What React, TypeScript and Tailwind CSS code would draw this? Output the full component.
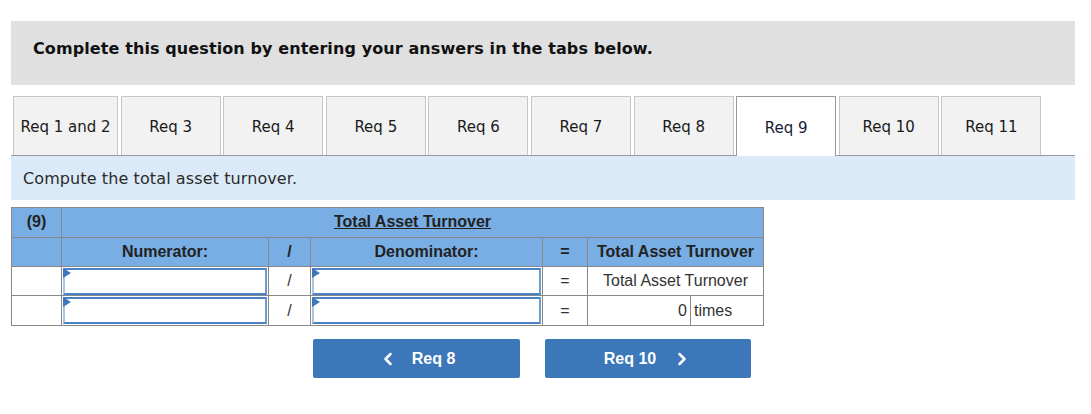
import React from "react";
import { ChevronLeft, ChevronRight } from "lucide-react";

const tabs = ["Req 1 and 2", "Req 3", "Req 4", "Req 5", "Req 6", "Req 7", "Req 8", "Req 9", "Req 10", "Req 11"];

function Field() {
  return (
    <div className="relative h-[27px] mx-px border-2 border-[#4a82c3] border-l-[#a9c6e8] border-r-[#6f9bd0] bg-white">
      <div className="absolute -left-[2px] -top-[2px] w-0 h-0 border-t-[5px] border-b-[5px] border-l-[8px] border-t-transparent border-b-transparent border-l-[#3b77b9]" />
    </div>
  );
}

export default function App() {
  const verdana = { fontFamily: '"DejaVu Sans", Verdana, sans-serif' };
  return (
    <div className="w-[1091px] h-[414px] bg-white pt-[21px] px-[11px]" style={{ fontFamily: '"Liberation Sans", Arial, sans-serif' }}>
      <div className="w-[1064px]">
        <div className="h-[64px] bg-[#e0e0e0] flex items-center pl-[22px] pb-[8px]">
          <span className="text-[16px] font-bold text-[#111] tracking-[0.1px]" style={verdana}>
            Complete this question by entering your answers in the tabs below.
          </span>
        </div>
        <div className="mt-[11px] flex items-end border-b border-[#999] pl-[2px] gap-[2.6px] h-[60px]">
          {tabs.map((t, i) => {
            const active = t === "Req 9";
            return (
              <div
                key={t}
                className={
                  "flex items-center justify-center pt-[3px] text-[15px] " +
                  (i === 0 ? "w-[105px] " : "w-[100px] ") +
                  (active
                    ? "h-[60px] -mb-px bg-white border border-b-0 border-[#999] text-[#1a1a3a]"
                    : "h-[59px] bg-[#f2f2f2] border border-b-0 border-[#c6c6c6] text-[#1a1a1a]")
                }
                style={verdana}
              >
                {t}
              </div>
            );
          })}
        </div>
        <div className="h-[44px] bg-[#dbeaf8] flex items-center pl-[12px] pt-[2px]">
          <span className="text-[16px] text-[#2b2b2b] tracking-[0.1px]" style={verdana}>
            Compute the total asset turnover.
          </span>
        </div>
        <table className="mt-[7px] border-collapse table-fixed w-[753px] text-[16px] text-[#222]">
          <colgroup>
            <col className="w-[50px]" />
            <col className="w-[207px]" />
            <col className="w-[42px]" />
            <col className="w-[232px]" />
            <col className="w-[45px]" />
            <col className="w-[103px]" />
            <col className="w-[73px]" />
          </colgroup>
          <tbody>
            <tr className="h-[30px] bg-[#78aee3] font-bold">
              <td className="border border-[#888] text-center align-top pt-[2px]">(9)</td>
              <td colSpan={6} className="border border-[#888] text-center align-top pt-[2px]">
                <span className="underline">Total Asset Turnover</span>
              </td>
            </tr>
            <tr className="h-[29px] bg-[#78aee3] font-bold">
              <td className="border border-[#888]"></td>
              <td className="border border-[#888] text-center">Numerator:</td>
              <td className="border border-[#888] text-center">/</td>
              <td className="border border-[#888] text-center">Denominator:</td>
              <td className="border border-[#888] text-center">=</td>
              <td colSpan={2} className="border border-[#888] text-center">Total Asset Turnover</td>
            </tr>
            <tr className="h-[29px]">
              <td className="border border-[#888]"></td>
              <td className="border border-[#888] p-0"><Field /></td>
              <td className="border border-[#888] text-center text-[#333]">/</td>
              <td className="border border-[#888] p-0"><Field /></td>
              <td className="border border-[#888] text-center text-[#333]">=</td>
              <td colSpan={2} className="border border-[#888] text-center text-[#333]">Total Asset Turnover</td>
            </tr>
            <tr className="h-[30px]">
              <td className="border border-[#888]"></td>
              <td className="border border-[#888] p-0"><Field /></td>
              <td className="border border-[#888] text-center text-[#333]">/</td>
              <td className="border border-[#888] p-0"><Field /></td>
              <td className="border border-[#888] text-center text-[#333]">=</td>
              <td className="border border-[#888] text-right pr-[3px] text-[#333]">0</td>
              <td className="border border-[#888] text-left pl-[3px] text-[#333]">times</td>
            </tr>
          </tbody>
        </table>
        <div className="mt-[13px] flex gap-[25px] ml-[302px]">
          <button className="w-[207px] h-[39px] rounded-[2px] bg-[#3b77b9] text-white font-bold text-[16px] flex items-center justify-center gap-[14px]">
            <ChevronLeft size={20} strokeWidth={3} />
            <span>Req 8</span>
          </button>
          <button className="w-[206px] h-[39px] rounded-[2px] bg-[#3b77b9] text-white font-bold text-[16px] flex items-center justify-center gap-[16px]">
            <span>Req 10</span>
            <ChevronRight size={20} strokeWidth={3} />
          </button>
        </div>
      </div>
    </div>
  );
}
